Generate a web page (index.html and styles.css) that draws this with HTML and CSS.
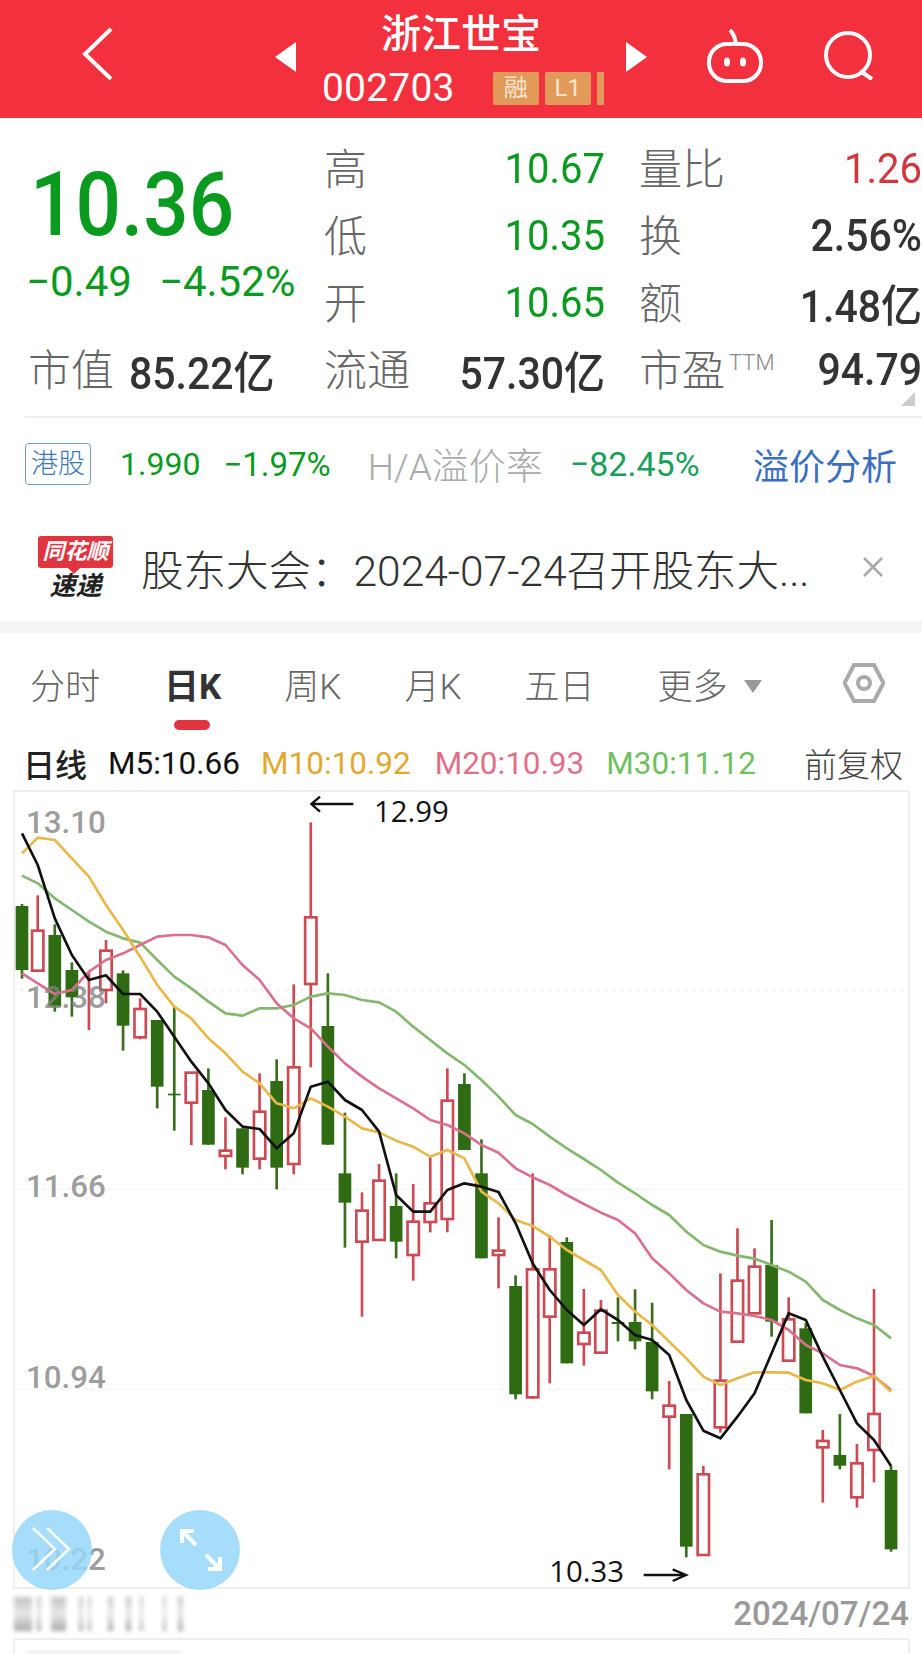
FILE: index.html
```html
<!DOCTYPE html>
<html lang="zh-CN">
<head>
  <meta charset="UTF-8">
  <title>浙江世宝 002703</title>
  <link rel="stylesheet" href="styles.css">
</head>
<body>
  <!-- 顶部标题栏 -->
  <header class="topbar">
    <svg class="back" viewBox="0 0 32 54"><polyline points="29,2 3,27 29,52"/></svg>
    <div class="stock">
      <span class="tri tri-left"></span>
      <div class="stock-info">
        <div class="stock-name">浙江世宝</div>
        <div class="stock-code">
          <span class="code">002703</span>
          <span class="tag tag-rong">融</span>
          <span class="tag tag-l1">L1</span>
          <span class="tag-cut"></span>
        </div>
      </div>
      <span class="tri tri-right"></span>
    </div>
    <svg class="robot" viewBox="0 0 56 54">
      <path d="M23 1c3 3 5 7 6 14"/>
      <rect x="2" y="15" width="52" height="37" rx="18"/>
      <ellipse class="eye" cx="20" cy="33" rx="3" ry="4.5"/>
      <ellipse class="eye" cx="36" cy="33" rx="3" ry="4.5"/>
    </svg>
    <svg class="search" viewBox="0 0 52 50">
      <circle cx="25" cy="25" r="22"/>
      <path d="M37 41l12 8"/>
    </svg>
  </header>

  <!-- 行情 -->
  <section class="quote">
    <div class="quote-main">
      <div class="price">10.36</div>
      <div class="change"><span>−0.49</span><span>−4.52%</span></div>
    </div>
    <div class="cell"><span class="label">高</span><span class="val down">10.67</span></div>
    <div class="cell"><span class="label">量比</span><span class="val up">1.26</span></div>
    <div class="cell"><span class="label">低</span><span class="val down">10.35</span></div>
    <div class="cell"><span class="label">换</span><span class="val">2.56%</span></div>
    <div class="cell"><span class="label">开</span><span class="val down">10.65</span></div>
    <div class="cell"><span class="label">额</span><span class="val">1.48亿</span></div>
    <div class="cell cell-cap"><span class="label">市值</span><span class="val">85.22亿</span></div>
    <div class="cell"><span class="label">流通</span><span class="val">57.30亿</span></div>
    <div class="cell"><span class="label">市盈<sup class="ttm">TTM</sup></span><span class="val">94.79</span></div>
    <span class="corner"></span>
  </section>

  <!-- 港股 -->
  <section class="hk">
    <span class="hk-tag">港股</span>
    <span class="hk-price">1.990</span>
    <span class="hk-pct">−1.97%</span>
    <span class="hk-label">H/A溢价率</span>
    <span class="hk-premium">−82.45%</span>
    <span class="hk-link">溢价分析</span>
  </section>

  <!-- 速递 -->
  <section class="news">
    <div class="logo">
      <div class="logo-top">同花顺</div>
      <div class="logo-bottom">速递</div>
    </div>
    <div class="news-text">股东大会：2024-07-24召开股东大...</div>
    <svg class="close" viewBox="0 0 22 20"><path d="M2 1l18 18M20 1L2 19"/></svg>
  </section>

  <div class="band"></div>

  <!-- 周期切换 -->
  <nav class="tabs">
    <span class="tab">分时</span>
    <span class="tab active">日K</span>
    <span class="tab">周K</span>
    <span class="tab">月K</span>
    <span class="tab">五日</span>
    <span class="tab tab-more">更多<i class="more-tri"></i></span>
    <svg class="hex" viewBox="0 0 42 40">
      <polygon points="1.5,20 11,2 31,2 40.5,20 31,38 11,38"/>
      <circle cx="21" cy="20" r="6"/>
    </svg>
  </nav>

  <div class="ma">
    <span class="ma-name">日线</span>
    <span class="ma5">M5:10.66</span>
    <span class="ma10">M10:10.92</span>
    <span class="ma20">M20:10.93</span>
    <span class="ma30">M30:11.12</span>
    <span class="ma-fq">前复权</span>
  </div>

  <!-- K线图 -->
  <div class="chart">
    <svg id="kline" class="kline" viewBox="45 6 2679 2385"></svg>
    <div class="fabs">
      <div class="fab">
        <svg viewBox="0 0 80 80"><path class="thin" d="M21 18l22 21-22 21M35 18l22 21-22 21"/></svg>
      </div>
      <div class="fab">
        <svg viewBox="0 0 80 80"><path d="M22 33V21h12M22 21l14 14M60 47v12H48M60 59L46 45"/></svg>
      </div>
    </div>
  </div>

  <div class="date-row">
    <div class="mosaic">
      <i class="m1"></i><i class="m2"></i><i class="m3"></i><i class="m4"></i><i class="m5"></i>
      <i class="m6"></i><i class="m7"></i><i class="m8"></i><i class="m9"></i><i class="m10"></i>
    </div>
    <span class="date">2024/07/24</span>
  </div>

  <div class="next-panel"><div class="next-stub"></div></div>

  <script src="chart.js"></script>
</body>
</html>
```

FILE: styles.css
```css
* {
  box-sizing: border-box;
}
html, body {
  margin: 0;
  padding: 0;
}
body {
  width: 922px;
  height: 1654px;
  overflow: hidden;
  background: #fff;
  color: #333;
  font-family: Roboto, "Noto Sans CJK SC", sans-serif;
}

/* 顶部标题栏 */
.topbar {
  height: 118px;
  background: #f2303e;
  color: #fff;
  display: flex;
  align-items: center;
  padding-left: 82px;
}
.topbar svg {
  fill: none;
  stroke: #fff;
}
.back {
  width: 32px;
  height: 54px;
  stroke-width: 4;
  margin-top: -10px;
}
.stock {
  display: flex;
  align-items: center;
  margin-left: 161px;
  width: 372px;
}
.tri {
  width: 0;
  height: 0;
  border-top: 15px solid transparent;
  border-bottom: 15px solid transparent;
  margin-top: -4px;
}
.tri-left {
  border-right: 21px solid #fff;
}
.tri-right {
  border-left: 21px solid #fff;
}
.stock-info {
  width: 330px;
  text-align: center;
}
.stock-name {
  font-size: 40px;
  line-height: 44px;
  font-weight: 500;
}
.stock-code {
  display: flex;
  align-items: center;
  height: 34px;
  margin-top: 14px;
  padding-left: 26px;
}
.code {
  font-size: 39px;
  letter-spacing: 0.2px;
  margin-right: 38px;
}
.tag {
  width: 46px;
  height: 33px;
  background: #e29a5a;
  color: #f9e6d2;
  border-radius: 2px;
  font-size: 24px;
  line-height: 33px;
  text-align: center;
  margin-right: 6px;
}
.tag-cut {
  width: 7px;
  height: 33px;
  background: #e29a5a;
}
.robot {
  width: 56px;
  height: 54px;
  stroke-width: 4;
  margin-left: 60px;
  margin-top: -7px;
}
.robot .eye {
  fill: #fff;
  stroke: none;
}
.search {
  width: 52px;
  height: 50px;
  stroke-width: 4;
  margin-left: 60px;
  margin-top: -8px;
}

/* 行情 */
.quote {
  position: relative;
  height: 300px;
  margin-left: 25px;
  padding: 17px 0 0 3px;
  display: grid;
  grid-template-columns: 262px 315px 317px;
  grid-template-rows: repeat(4, 67px);
  border-bottom: 2px solid #eee;
}
.quote-main {
  grid-row: 1 / span 3;
}
.price {
  font-size: 80px;
  line-height: 90px;
  font-weight: 500;
  color: #0a9a1f;
  margin-top: 25px;
  padding-left: 2px;
  transform: scaleY(1.12);
}
.change {
  display: flex;
  gap: 27px;
  font-size: 42px;
  line-height: 40px;
  margin: 12px 0 0 -2px;
  color: #0a9a1f;
  white-space: nowrap;
}
.cell {
  display: flex;
  justify-content: space-between;
  align-items: center;
  padding-left: 34px;
  font-size: 41px;
}
.label {
  font-size: 43px;
  color: #666;
  font-weight: 300;
  margin-bottom: 5px;
}
.val {
  color: #333;
  font-weight: 500;
  transform: scaleY(1.08);
}
.cell-cap {
  justify-content: flex-start;
  gap: 15px;
  padding-left: 0;
}
.down {
  color: #0a9a1f;
  font-weight: 400;
  font-size: 40px;
}
.up {
  color: #d0383f;
  font-weight: 400;
  font-size: 40px;
}
.ttm {
  font-size: 22px;
  color: #888;
  vertical-align: 16px;
  line-height: 0;
  margin-left: 4px;
}
.corner {
  position: absolute;
  right: 7px;
  bottom: 10px;
  width: 0;
  height: 0;
  border-left: 14px solid transparent;
  border-bottom: 14px solid #ccc;
}

/* 港股 */
.hk {
  height: 92px;
  display: flex;
  align-items: center;
  padding-left: 25px;
  font-size: 33px;
}
.hk-tag {
  width: 66px;
  height: 42px;
  border: 1px solid #7c9bb8;
  border-radius: 4px;
  color: #3b78b5;
  font-size: 27px;
  line-height: 40px;
  text-align: center;
  font-weight: 300;
}
.hk-price {
  margin-left: 29px;
  color: #0a9a1f;
  font-size: 32px;
}
.hk-pct {
  margin-left: 23px;
  color: #0a9a1f;
}
.hk-label {
  margin-left: 37px;
  color: #aaa;
  font-size: 37px;
  font-weight: 300;
}
.hk-premium {
  margin-left: 27px;
  color: #16a05a;
  font-size: 34px;
}
.hk-link {
  margin-left: auto;
  margin-right: 25px;
  color: #3a6fc0;
  font-size: 36px;
}

/* 速递 */
.news {
  height: 111px;
  display: flex;
  align-items: center;
  padding: 3px 38px 0 38px;
}
.logo {
  width: 75px;
  text-align: center;
  font-style: italic;
  font-weight: 700;
}
.logo-top {
  position: relative;
  height: 32px;
  background: #e03540;
  color: #fff;
  border-radius: 3px;
  font-size: 22px;
  line-height: 32px;
}
.logo-top::after {
  content: "";
  position: absolute;
  left: 31px;
  bottom: -4px;
  width: 10px;
  height: 10px;
  background: #e03540;
  transform: rotate(45deg);
}
.logo-bottom {
  color: #222;
  font-size: 26px;
  line-height: 26px;
  margin-top: 5px;
}
.news-text {
  margin-left: 28px;
  font-size: 42.5px;
  color: #333;
  white-space: nowrap;
  font-weight: 300;
}
.close {
  width: 22px;
  height: 20px;
  margin-left: auto;
  fill: none;
  stroke: #aaa;
  stroke-width: 2.5;
}
.band {
  height: 12px;
  background: #f5f5f5;
}

/* 周期切换 */
.tabs {
  height: 100px;
  display: flex;
  align-items: center;
  gap: 63px;
  padding: 0 37px 0 30px;
  font-size: 35px;
  color: #666;
  font-weight: 300;
}
.tab {
  position: relative;
  white-space: nowrap;
}
.tab.active {
  color: #333;
  font-weight: 700;
  margin-left: 1px;
}
.tab.active::after {
  content: "";
  position: absolute;
  left: 10px;
  top: 62px;
  width: 36px;
  height: 10px;
  background: #e03540;
  border-radius: 5px;
}
.more-tri {
  display: inline-block;
  margin-left: 16px;
  vertical-align: 6px;
  border-left: 9px solid transparent;
  border-right: 9px solid transparent;
  border-top: 13px solid #999;
}
.hex {
  width: 42px;
  height: 40px;
  margin-left: auto;
  fill: none;
  stroke: #aaa;
  stroke-width: 4;
}

/* 均线 */
.ma {
  height: 57px;
  display: flex;
  align-items: center;
  padding: 3px 19px 0 23px;
  font-size: 31.5px;
}
.ma-name {
  font-size: 32px;
  color: #222;
  font-weight: 500;
  margin-right: 21px;
}
.ma5 {
  color: #111;
  margin-right: 21px;
}
.ma10 {
  color: #e0a92e;
  margin-right: 24px;
}
.ma20 {
  color: #e0708a;
  margin-right: 22px;
}
.ma30 {
  color: #6fc060;
}
.ma-fq {
  margin-left: auto;
  font-size: 33px;
  color: #444;
  font-weight: 300;
}

/* K线图 */
.chart {
  position: relative;
  height: 799px;
  margin: 0 12px 0 13px;
  border: 2px solid #eee;
}
.kline {
  display: block;
  width: 893px;
  height: 795px;
  overflow: visible;
}
.grid {
  stroke: #eee;
  stroke-width: 4;
  stroke-dasharray: 10 14;
}
.wick {
  stroke-width: 8;
}
.candle-up {
  stroke: #cb4a54;
  fill: #fff;
}
.candle-down {
  stroke: #3a6d1e;
  fill: #2e6b12;
}
.body-up {
  stroke-width: 8;
}
.body-down {
  stroke: none;
}
.line {
  fill: none;
  stroke-width: 8;
  stroke-linejoin: round;
}
.l5 {
  stroke: #111;
}
.l10 {
  stroke: #e8b84a;
}
.l20 {
  stroke: #d9708c;
}
.l30 {
  stroke: #84b86e;
}
.axis {
  font-family: Roboto, sans-serif;
  font-size: 94px;
  font-weight: 500;
  fill: rgba(130, 130, 130, 0.8);
}
.note {
  font-family: "Open Sans", sans-serif;
  font-size: 88px;
  fill: #111;
}
.arrow {
  fill: none;
  stroke: #111;
  stroke-width: 7;
}
.fabs {
  position: absolute;
  left: -3px;
  bottom: -3px;
  display: flex;
  gap: 68px;
}
.fab {
  width: 80px;
  height: 80px;
  border-radius: 50%;
  background: rgba(150, 215, 250, 0.85);
}
.fab svg {
  display: block;
  fill: none;
  stroke: #fff;
  stroke-width: 4;
}
.fab .thin {
  stroke-width: 2.5;
}

/* 日期 */
.date-row {
  height: 49px;
  display: flex;
  align-items: center;
  justify-content: space-between;
  padding: 0 13px 0 14px;
}
.mosaic {
  display: flex;
  height: 34px;
  filter: blur(2px);
}
.mosaic i {
  display: block;
  background: linear-gradient(#c4c4c4, #e8e8e8 50%, #a8a8a8);
}
.m1 { width: 18px; margin-right: 5px; }
.m2 { width: 4px; margin-right: 10px; }
.m3 { width: 15px; margin-right: 13px; }
.m4 { width: 4px; margin-right: 5px; }
.m5 { width: 3px; margin-right: 17px; }
.m6 { width: 5px; margin-right: 13px; }
.m7 { width: 5px; margin-right: 9px; }
.m8 { width: 3px; margin-right: 20px; }
.m9 { width: 3px; margin-right: 12px; }
.m10 { width: 5px; }
.date {
  font-size: 33px;
  font-weight: 500;
  color: #999;
}
.next-panel {
  height: 20px;
  margin: 0 12px 0 13px;
  border: 2px solid #eee;
  border-bottom: 0;
  padding: 10px 0 0 10px;
}
.next-stub {
  width: 158px;
  height: 8px;
  background: #f5f5f5;
  border-radius: 4px;
}
```

FILE: chart.js
```js
// K线数据：[类型, 上影, 实体顶, 实体底, 下影]，单位是 1/3 像素
const candles = [
  ["g",342,348,540,566],["r",316,422,542,542],["g",403,435,650,665],["g",517,540,622,680],
  ["r",545,590,590,720],["r",450,482,600,640],["g",541,550,707,782],["r",625,657,742,748],
  ["g",690,690,890,955],["g",650,911,916,1022],["r",848,848,938,1065],["g",835,900,1064,1064],
  ["r",982,1082,1098,1138],["g",1015,1015,1133,1153],["r",850,965,1106,1138],["g",808,873,1133,1198],
  ["r",583,832,1122,1153],["r",97,382,582,832],["g",550,708,1064,1064],["g",968,1150,1238,1373],
  ["r",1207,1262,1355,1580],["r",1122,1172,1350,1350],["g",1150,1248,1355,1405],["r",1182,1295,1395,1472],
  ["r",1100,1240,1296,1327],["r",835,932,1287,1327],["g",850,882,1080,1080],["g",1048,1150,1405,1405],
  ["r",1282,1382,1395,1495],["g",1456,1488,1813,1828],["r",1150,1438,1822,1826],["r",1335,1438,1580,1780],
  ["g",1342,1356,1720,1720],["r",1497,1628,1662,1727],["r",1530,1562,1688,1692],["g",1522,1596,1602,1654],
  ["g",1498,1596,1654,1678],["g",1538,1656,1804,1828],["r",1773,1847,1880,2038],["g",1872,1872,2270,2302],
  ["r",2028,2053,2295,2295],["r",1450,1772,1912,1928],["r",1315,1472,1655,1658],["r",1375,1430,1570,1570],
  ["g",1290,1425,1595,1640],["r",1522,1588,1712,1712],["g",1600,1615,1870,1870],["r",1920,1953,1972,2138],
  ["g",1872,1995,2027,2038],["r",1962,2020,2122,2153],["r",1497,1872,1980,2077],["g",2028,2040,2278,2285]
];

// 均线，每根K线一个值
const lines = {
  l30: [257,280,325,360,395,425,445,458,510,560,595,635,670,677,655,655,645,620,610,615,630,637,665,710,750,790,825,870,920,975,1002,1040,1075,1107,1140,1178,1210,1245,1275,1325,1365,1385,1397,1406,1425,1445,1475,1530,1560,1585,1605,1645],
  l20: [550,580,612,600,545,510,490,465,440,435,435,442,465,525,570,640,685,715,770,820,860,895,925,955,990,1005,1030,1065,1088,1135,1162,1185,1215,1242,1268,1290,1330,1405,1450,1500,1540,1565,1570,1578,1590,1620,1665,1690,1725,1735,1758,1800],
  l10: [190,143,150,205,260,345,420,500,585,650,685,745,790,845,880,940,955,925,950,980,1015,1027,1052,1070,1100,1080,1105,1205,1240,1290,1308,1340,1380,1410,1440,1515,1565,1605,1655,1705,1760,1785,1765,1747,1747,1748,1770,1780,1800,1775,1758,1805],
  l5: [130,225,385,495,570,556,612,612,665,740,815,880,960,1010,1017,1075,1030,890,875,930,960,1025,1215,1265,1265,1200,1180,1190,1206,1300,1420,1500,1560,1605,1558,1590,1635,1650,1695,1830,1922,1945,1880,1810,1690,1570,1590,1700,1800,1900,1950,2028]
};

const axis = [["13.10",130],["12.38",655],["11.66",1220],["10.94",1795],["10.22",2340]];
const gridRows = [600,1197,1797];

function xOf(i) {
  return i === 0 ? 66 : 62 + 51.2 * i;
}

function candleSvg(c, i) {
  const x = xOf(i);
  const up = c[0] === "r";
  let out = '<g class="' + (up ? "candle-up" : "candle-down") + '">';
  out += '<line class="wick" x1="' + x + '" x2="' + x + '" y1="' + c[1] + '" y2="' + c[4] + '"/>';
  if (c[3] > c[2]) {
    if (up) {
      out += '<rect class="body-up" x="' + (x - 17) + '" y="' + c[2] + '" width="34" height="' + (c[3] - c[2]) + '"/>';
    } else {
      out += '<rect class="body-down" x="' + (x - 19) + '" y="' + c[2] + '" width="38" height="' + (c[3] - c[2]) + '"/>';
    }
  }
  return out + "</g>";
}

let svg = "";
gridRows.forEach(function (y) {
  svg += '<line class="grid" x1="60" x2="2720" y1="' + y + '" y2="' + y + '"/>';
});
svg += candles.map(candleSvg).join("");
Object.keys(lines).forEach(function (name) {
  const pts = lines[name].map(function (y, i) { return xOf(i) + "," + y; }).join(" ");
  svg += '<polyline class="line ' + name + '" points="' + pts + '"/>';
});
axis.forEach(function (a) {
  svg += '<text class="axis" x="78" y="' + a[1] + '">' + a[0] + "</text>";
});
svg += '<path class="arrow" d="M1060 42H936M960 20l-26 22 26 23"/>';
svg += '<text class="note" x="1122" y="95">12.99</text>';
svg += '<text class="note" x="1648" y="2377">10.33</text>';
svg += '<path class="arrow" d="M1931 2355h126M2018 2338l40 17-40 18"/>';
document.getElementById("kline").innerHTML = svg;
```
